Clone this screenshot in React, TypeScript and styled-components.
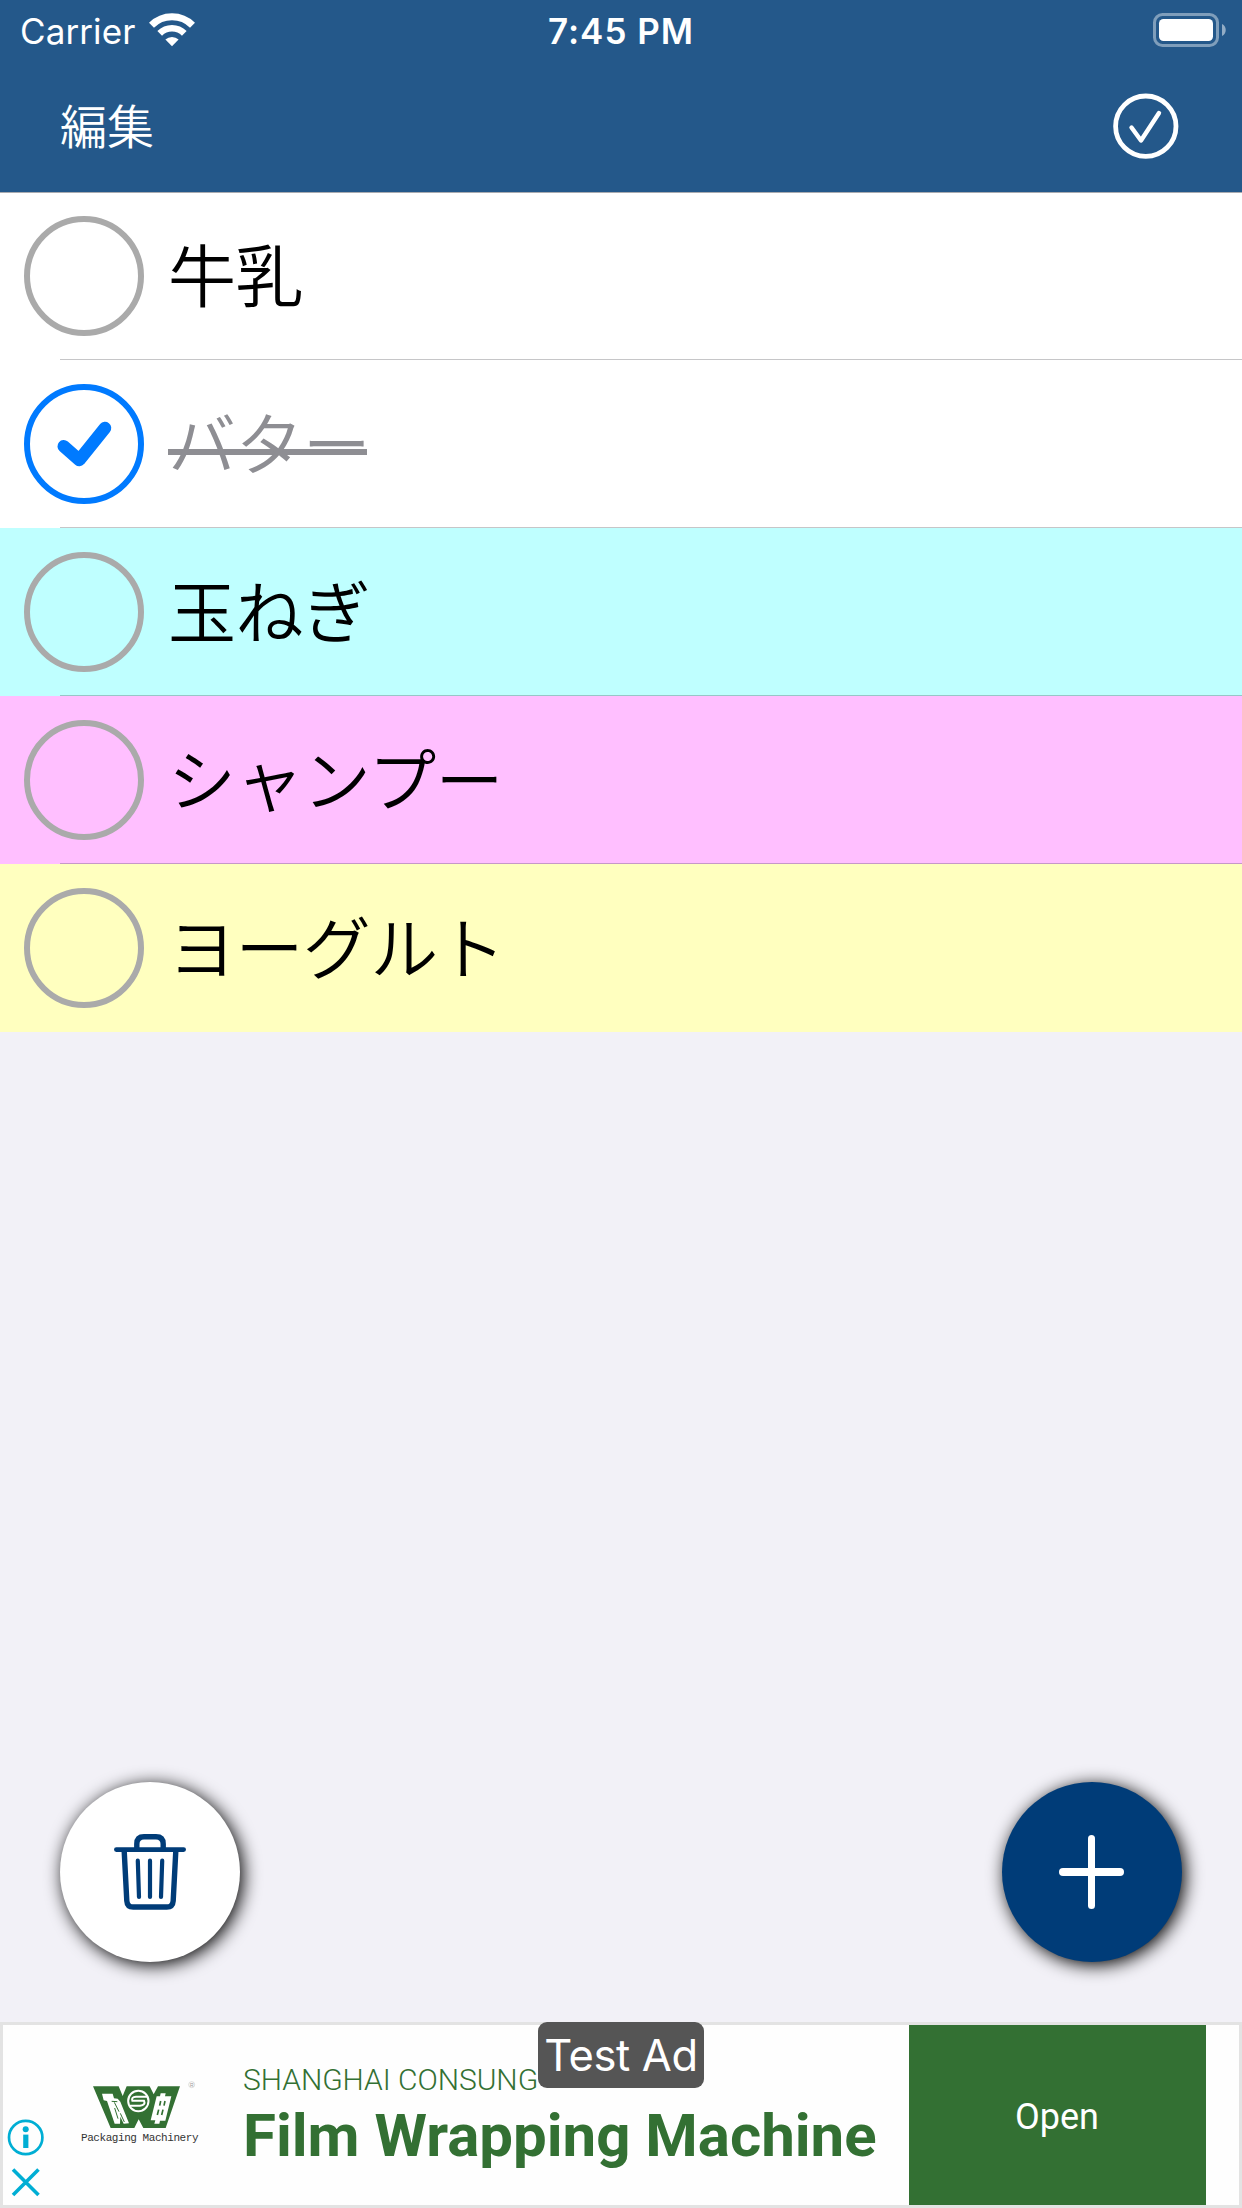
import React from "react";
import styled, { createGlobalStyle } from "styled-components";

const GlobalStyle = createGlobalStyle`
  * { box-sizing: border-box; }
  body { margin: 0; background: #f2f1f7; }
`;

const cjk = `"Noto Sans CJK JP", sans-serif`;
const latin = `Inter, "Noto Sans CJK JP", sans-serif`;

const Screen = styled.main`
  display: flex;
  flex-direction: column;
  width: 1242px;
  height: 2208px;
  overflow: hidden;
  background: #f2f1f7;
  font-family: ${latin};
`;

const Header = styled.header`
  display: flex;
  flex-direction: column;
  height: 192px;
  flex: none;
  background: #24588a;
  box-shadow: 0 1px 0 #a9abb0;
  z-index: 1;
  color: #fff;
`;

const StatusBar = styled.div`
  display: grid;
  grid-template-columns: 1fr auto 1fr;
  align-items: center;
  height: 60px;
  padding: 0 16px 0 20px;
`;

const Carrier = styled.div`
  display: flex;
  align-items: center;
  gap: 14px;
  font-size: 35px;
  line-height: 58px;
  letter-spacing: 0.1px;
  height: 60px;
  padding-top: 2px;

  svg { margin-top: -3px; }
`;

const Clock = styled.time`
  font-size: 35px;
  font-weight: 600;
  line-height: 58px;
  letter-spacing: 1px;
  margin-right: 4px;
  padding-top: 2px;
`;

const Battery = styled.svg`
  justify-self: end;
`;

const NavBar = styled.nav`
  display: flex;
  align-items: center;
  justify-content: space-between;
  height: 132px;
  padding: 0 63px 0 60px;
`;

const EditButton = styled.button`
  border: 0;
  padding: 0 0 5px;
  background: none;
  color: #fff;
  font: 350 47px/60px ${cjk};
`;

const IconButton = styled.button`
  display: flex;
  border: 0;
  padding: 0;
  background: none;
`;

const List = styled.ul`
  margin: 0;
  padding: 0;
  list-style: none;
`;

const Row = styled.li<{ $color: string }>`
  display: grid;
  grid-template-rows: 167px 1px;
  height: 168px;
  background: ${(p) => p.$color};
`;

const RowBody = styled.div`
  display: flex;
  align-items: center;
  gap: 24px;
  padding: 1px 0 0 24px;
`;

const Separator = styled.div`
  margin-left: 60px;
  background: rgba(60, 60, 67, 0.29);
`;

const Checkbox = styled.span<{ $checked: boolean }>`
  display: flex;
  flex: none;
  width: 120px;
  height: 120px;
  border: 6px solid ${(p) => (p.$checked ? "#007aff" : "#aaaaaa")};
  border-radius: 50%;
`;

const Label = styled.span<{ $checked: boolean }>`
  margin-bottom: 6px;
  font-family: ${cjk};
  font-weight: 350;
  font-size: 68px;
  line-height: 96px;
  letter-spacing: -0.6px;
  color: ${(p) => (p.$checked ? "#8e8e93" : "#000")};
  ${(p) =>
    p.$checked &&
    "background: linear-gradient(#8e8e93, #8e8e93) 0 56px / 199px 6px no-repeat;"}
`;

const Actions = styled.section`
  display: flex;
  justify-content: space-between;
  margin-top: auto;
  padding: 0 60px 60px;
`;

const RoundButton = styled.button<{ $fill: string }>`
  display: flex;
  align-items: center;
  justify-content: center;
  width: 180px;
  height: 180px;
  padding: 0;
  border: 0;
  border-radius: 50%;
  background: ${(p) => p.$fill};
  box-shadow: 3px 3px 18px #000;
`;

const AdBanner = styled.aside`
  position: relative;
  display: flex;
  height: 186px;
  flex: none;
  border: 3px solid #e3e3e3;
  background: #fefefe;
`;

const AdControls = styled.div`
  display: flex;
  flex-direction: column;
  justify-content: flex-end;
  gap: 12px;
  width: 45px;
  padding: 0 0 8px 4px;
`;

const Brand = styled.div`
  display: flex;
  flex-direction: column;
  width: 195px;
  padding: 52px 0 0 33px;
`;

const BrandMark = styled.svg`
  margin-left: 1px;
  flex: none;
  overflow: visible;
`;

const BrandName = styled.span`
  margin-top: 4px;
  font: 11px/14px "Liberation Mono", monospace;
  letter-spacing: -0.44px;
  color: #333;
  white-space: nowrap;
`;

const AdCopy = styled.div`
  flex: 1;
  font-family: Roboto, sans-serif;
  color: #337033;
  white-space: nowrap;
  padding-top: 37px;
`;

const Advertiser = styled.div`
  font-size: 30px;
  font-weight: 300;
  line-height: 36px;
  letter-spacing: -0.05px;
`;

const Headline = styled.div`
  font-size: 60px;
  font-weight: 700;
  line-height: 75px;
  letter-spacing: -0.03px;
`;

const OpenButton = styled.button`
  width: 297px;
  margin-right: 33px;
  border: 0;
  padding: 4px 1px 0 0;
  background: #337033;
  color: #fff;
  font: 400 36px Roboto, sans-serif;
`;

const TestBadge = styled.div`
  position: absolute;
  top: -3px;
  left: 535px;
  width: 166px;
  height: 66px;
  border-radius: 9px;
  background: #555;
  color: #fff;
  font-size: 43.5px;
  letter-spacing: -0.35px;
  line-height: 67px;
  text-align: center;
  white-space: nowrap;
`;

const WifiIcon = () => (
  <svg width="46" height="34" viewBox="0 0 46 34" fill="none">
    <path d="M2.5 12.2 A29 29 0 0 1 43.5 12.2" stroke="#fff" strokeWidth="7" />
    <path d="M10.7 20.4 A17.4 17.4 0 0 1 35.3 20.4" stroke="#fff" strokeWidth="6.6" />
    <path d="M16.4 26.6 A9.5 9.5 0 0 1 29.6 26.6 L23 33.2 Z" fill="#fff" />
  </svg>
);

const BatteryIcon = () => (
  <Battery width="73" height="34" viewBox="0 0 73 34">
    <rect x="1.5" y="1.5" width="63" height="31" rx="8" fill="none" stroke="#fff" strokeOpacity=".42" strokeWidth="3" />
    <rect x="6" y="6" width="54" height="22" rx="4.5" fill="#fff" />
    <path d="M69 11 C74 13 74 21 69 23 Z" fill="#fff" fillOpacity=".5" />
  </Battery>
);

const DoneIcon = () => (
  <svg width="66" height="66" viewBox="0 0 66 66" fill="none" stroke="#fff" strokeLinecap="round" strokeLinejoin="round">
    <circle cx="32.8" cy="33.2" r="30.2" strokeWidth="4.8" />
    <path d="M18.5 34.5 L28 47.5 L46 20" strokeWidth="4.4" />
  </svg>
);

const CheckIcon = () => (
  <svg width="108" height="108" viewBox="30 30 108 108" fill="none">
    <path d="M63.7 86.3 L79.3 100 L105 68" stroke="#007aff" strokeWidth="12.5" strokeLinecap="round" strokeLinejoin="round" />
  </svg>
);

const TrashIcon = () => (
  <svg width="72" height="76" viewBox="0 0 72 76" fill="none" stroke="#003c78" strokeLinecap="round" strokeLinejoin="round">
    <path d="M2.4 15.6 H69.6" strokeWidth="4.8" />
    <path d="M22.8 15 V10 Q22.8 2.8 30 2.8 H42 Q49.2 2.8 49.2 10 V15" strokeWidth="5.4" />
    <path d="M10.2 17 L12.8 66.8 Q13.2 73 19.2 73 H52.8 Q58.8 73 59.2 66.8 L61.8 17" strokeWidth="5.4" />
    <path d="M23.8 26.7 L25 63 M36 26.7 V63 M48.2 26.7 L47 63" strokeWidth="4.2" />
  </svg>
);

const PlusIcon = () => (
  <svg width="66" height="76" viewBox="0 0 66 76" fill="#fff">
    <rect x="0" y="34" width="65" height="8" rx="4" />
    <rect x="29" y="1" width="7" height="74" rx="3.5" />
  </svg>
);

const InfoIcon = () => (
  <svg width="38" height="37" viewBox="0 0 38 37">
    <circle cx="18.7" cy="18.5" r="16.7" fill="none" stroke="#00aed4" strokeWidth="2.7" />
    <circle cx="18.7" cy="10.2" r="3" fill="#00aed4" />
    <rect x="16.2" y="15.6" width="5.2" height="13.4" fill="#00aed4" />
  </svg>
);

const CloseIcon = () => (
  <svg width="38" height="29" viewBox="0 0 38 29">
    <path d="M6 1.5 L31.5 27 M31.5 1.5 L6 27" stroke="#00aed4" strokeWidth="3.6" />
  </svg>
);

const BrandLogo = () => (
  <BrandMark width="118" height="50" viewBox="66 20 354 150">
    <path d="M99 48 H176 L188 77 L200 48 H269 L281 72 L294 48 H360 L317 173 H250 L236 147 L223 173 H152 Z" fill="#337033" />
    <circle cx="235" cy="92" r="30.5" fill="none" stroke="#fff" strokeWidth="6" />
    <path d="M262 79 H228 Q213 80 217 91 H252 Q258 104 240 106 H208" fill="none" stroke="#fff" strokeWidth="6" />
    <path d="M126 70 L158 70 L162 84 L173 85 L181 94 L207 159 L191 160 L181 139 L180 160 L164 160 L141 92 L131 90 Z" fill="#fff" />
    <path d="M155 93 L172 94 M163 96 L177 124 M164 113 L174 145 M181 129 L193 155" stroke="#337033" strokeWidth="3" />
    <path d="M302 69 H317 L315 78 H334 L316 151 H300 L298 160 H283 L286 150 H272 L290 78 H300 Z" fill="#fff" />
    <path d="M302 92 L299 106 M315 92 L312 106 M296 118 L292 134 M309 118 L305 134" stroke="#337033" strokeWidth="5" />
    <circle cx="395" cy="43" r="9" fill="none" stroke="#ccc" strokeWidth="2" />
    <text x="390" y="49" fontFamily="Liberation Sans" fontSize="15" fill="#999">R</text>
  </BrandMark>
);

const items = [
  { name: "牛乳", color: "#ffffff", checked: false },
  { name: "バター", color: "#ffffff", checked: true },
  { name: "玉ねぎ", color: "#bfffff", checked: false },
  { name: "シャンプー", color: "#ffbfff", checked: false },
  { name: "ヨーグルト", color: "#ffffbf", checked: false },
];

export default function App() {
  return (
    <Screen>
      <GlobalStyle />
      <Header>
        <StatusBar>
          <Carrier>
            Carrier
            <WifiIcon />
          </Carrier>
          <Clock>7:45 PM</Clock>
          <BatteryIcon />
        </StatusBar>
        <NavBar>
          <EditButton>編集</EditButton>
          <IconButton aria-label="完了">
            <DoneIcon />
          </IconButton>
        </NavBar>
      </Header>
      <List>
        {items.map((item, i) => (
          <Row key={item.name} $color={item.color}>
            <RowBody>
              <Checkbox $checked={item.checked}>{item.checked && <CheckIcon />}</Checkbox>
              <Label $checked={item.checked}>{item.name}</Label>
            </RowBody>
            {i < items.length - 1 && <Separator />}
          </Row>
        ))}
      </List>
      <Actions>
        <RoundButton $fill="#fff" aria-label="削除">
          <TrashIcon />
        </RoundButton>
        <RoundButton $fill="#003c78" aria-label="追加">
          <PlusIcon />
        </RoundButton>
      </Actions>
      <AdBanner>
        <AdControls>
          <InfoIcon />
          <CloseIcon />
        </AdControls>
        <Brand>
          <BrandLogo />
          <BrandName>Packaging Machinery</BrandName>
        </Brand>
        <AdCopy>
          <Advertiser>SHANGHAI CONSUNG</Advertiser>
          <Headline>Film Wrapping Machine</Headline>
        </AdCopy>
        <OpenButton>Open</OpenButton>
        <TestBadge>Test Ad</TestBadge>
      </AdBanner>
    </Screen>
  );
}
